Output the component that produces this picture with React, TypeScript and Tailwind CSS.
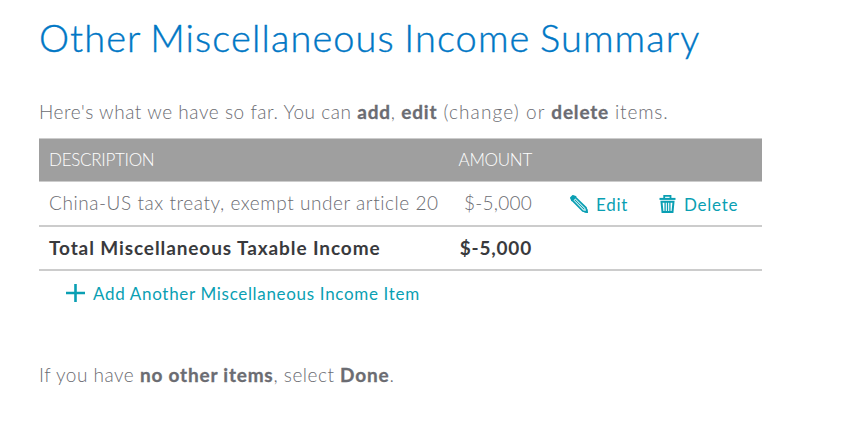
import type { ReactNode } from "react";

type IncomeItem = {
  id: number;
  description: string;
  amount: string;
};

const items: IncomeItem[] = [
  {
    id: 1,
    description: "China-US tax treaty, exempt under article 20",
    amount: "$-5,000",
  },
];

function PencilIcon() {
  return (
    <svg className="h-[18px] w-[18px] shrink-0" viewBox="0 0 18 18" fill="none">
      <path d="M.8 2.8 2.8.8 5.6 1.8 2 5.4Z" fill="currentColor" stroke="currentColor" strokeWidth="1.6" strokeLinejoin="round" />
      <path d="M2.2 5.2 5.2 2.2 16 12.8 17 17 12.8 16Z" stroke="currentColor" strokeWidth="1.7" />
      <path d="M4.6 4.6 14.4 14.4" stroke="currentColor" strokeWidth="1.1" />
      <path d="M14.2 17.4 17.6 14V17.9Z" fill="currentColor" />
    </svg>
  );
}

function TrashIcon() {
  return (
    <svg className="h-[18px] w-[17px] shrink-0" viewBox="0 0 17 18" fill="none" stroke="currentColor">
      <path d="M5.2 3V.9h6.3V3" strokeWidth="1.8" />
      <path d="M.5 3.9h16" strokeWidth="2" />
      <path d="M2.5 6.8h12l-1 10.1h-10Z" strokeWidth="2" />
      <path d="M6.1 6v11M8.5 6v11M10.9 6v11" strokeWidth="1.3" />
    </svg>
  );
}

function PlusIcon() {
  return (
    <svg className="mb-[3px] h-[18px] w-[19px] shrink-0" viewBox="0 0 19 18" fill="none">
      <path d="M9.5 0v18M0 9h19" stroke="currentColor" strokeWidth="2.6" />
    </svg>
  );
}

function ActionLink({
  icon,
  className,
  children,
}: {
  icon: ReactNode;
  className?: string;
  children: ReactNode;
}) {
  return (
    <a
      href="#"
      className={`inline-flex items-center gap-2 whitespace-nowrap text-[17px] leading-5 text-[#0a9fb3] ${className ?? ""}`}
    >
      {icon}
      {children}
    </a>
  );
}

function Strong({ children }: { children: ReactNode }) {
  return <b className="font-bold tracking-[0.8px] [-webkit-text-stroke:0.3px]">{children}</b>;
}

export default function App() {
  return (
    <main className="h-[424px] overflow-hidden bg-white pl-[39px] font-['Lato',sans-serif] whitespace-nowrap text-[#6b6c72]">
      <h1 className="pt-[13px] text-[38px] leading-[48px] font-light tracking-[1.1px] [word-spacing:-2px] text-[#0077c5] [-webkit-text-stroke:0.4px]">
        Other Miscellaneous Income Summary
      </h1>

      <p className="mt-[39px] text-[19px] leading-6 font-light tracking-[0.55px]">
        Here's what we have so far. You can <Strong>add</Strong>,{" "}
        <Strong>edit</Strong>
        <span className="tracking-[1.1px]"> (change) or </span>
        <Strong>delete</Strong>
        <span className="tracking-[0.85px]"> items.</span>
      </p>

      <section className="mt-[14px] w-[723px]">
        <div className="flex h-[44px] items-center border-y border-[#ccc] bg-[#9f9f9f] pr-[230px] pb-px pl-[10px] text-[17px] leading-[23px] font-light tracking-[-0.28px] text-white">
          <span className="grow">DESCRIPTION</span>
          <span>AMOUNT</span>
        </div>

        {items.map((item) => (
          <div
            key={item.id}
            className="flex h-[45px] items-center border-b-2 border-[#ccc] pl-[10px]"
          >
            <span className="w-[400px] text-[19px] font-light tracking-[0.57px]">
              {item.description}
            </span>
            <span className="w-[93px] pr-[10px] text-right text-[19px] font-light tracking-[0.25px]">
              {item.amount}
            </span>
            <ActionLink icon={<PencilIcon />} className="ml-7 w-[89px]">
              <span className="pt-[2px] tracking-[0.7px]">Edit</span>
            </ActionLink>
            <ActionLink icon={<TrashIcon />}>
              <span className="pt-[2px] tracking-[0.75px]">Delete</span>
            </ActionLink>
          </div>
        ))}

        <div className="flex h-11 items-center border-b-2 border-[#ccc] pr-[230px] pl-[10px] text-[19px] font-bold tracking-[0.9px] text-[#393a3d]">
          <span className="grow">Total Miscellaneous Taxable Income</span>
          <span className="tracking-[0.8px]">$-5,000</span>
        </div>

        <ActionLink icon={<PlusIcon />} className="mt-3 ml-[27px] h-[22px]">
          <span className="tracking-[0.68px]">Add Another Miscellaneous Income Item</span>
        </ActionLink>
      </section>

      <p className="mt-[55px] text-[19px] leading-6 font-light tracking-[0.5px]">
        If you have <Strong>no other items</Strong>, select <Strong>Done</Strong>.
      </p>
    </main>
  );
}
